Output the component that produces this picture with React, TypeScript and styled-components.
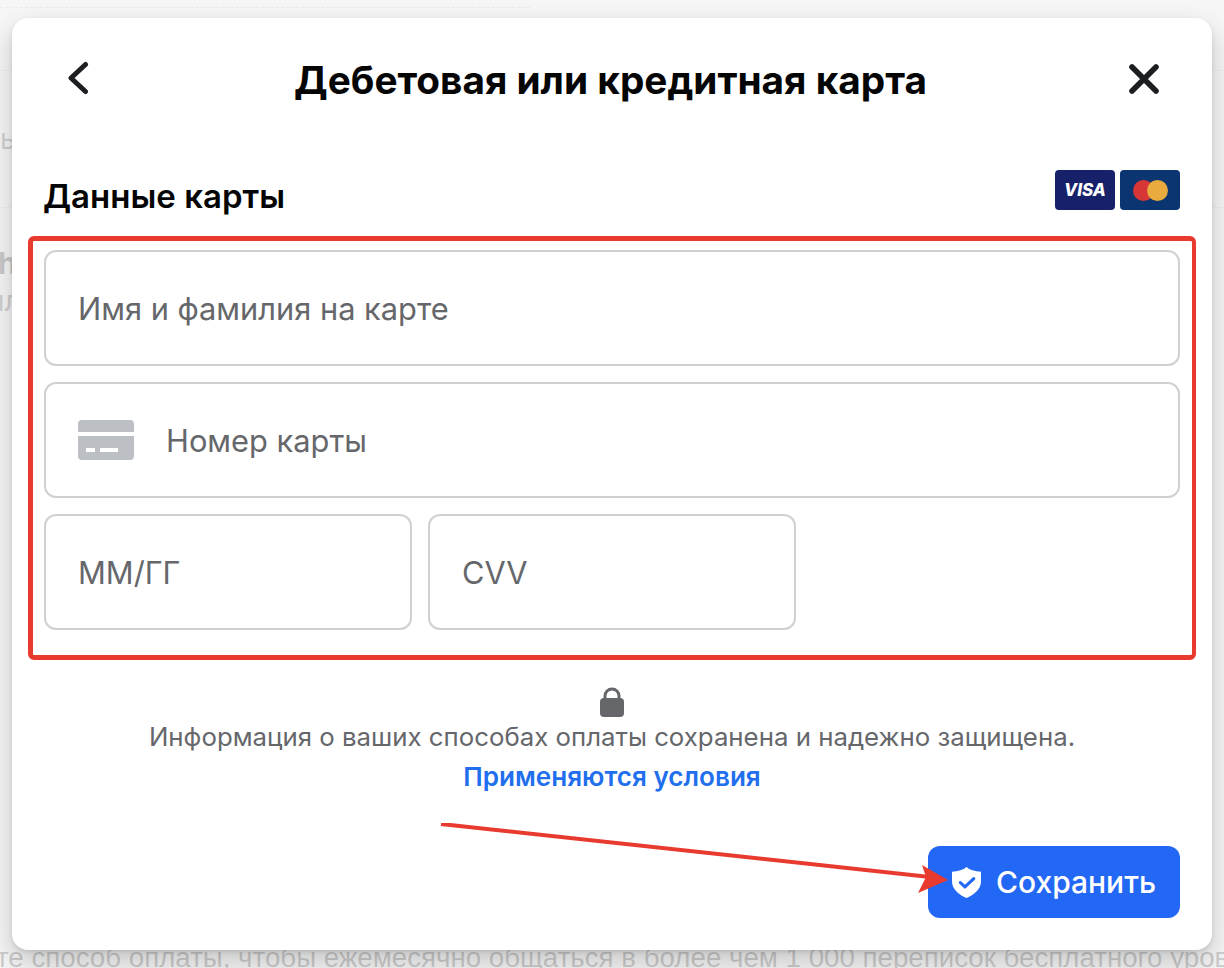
import styled, { createGlobalStyle } from 'styled-components'

const GlobalStyle = createGlobalStyle`
  html, body {
    margin: 0;
    height: 100%;
    overflow: hidden;
    font-family: Inter, "Noto Sans", sans-serif;
  }
  * { box-sizing: border-box; }
`

function BackIcon() {
  return (
    <svg width="24" height="36" viewBox="0 0 24 36" fill="none">
      <path d="M19.5 3.5 L5 17 L19.5 30.5" stroke="#1c1e21" strokeWidth="5" strokeLinecap="round" strokeLinejoin="round" />
    </svg>
  )
}

function CloseIcon() {
  return (
    <svg width="32" height="32" viewBox="0 0 32 32" fill="none">
      <path d="M4 4 L28 28 M28 4 L4 28" stroke="#1c1e21" strokeWidth="5.6" strokeLinecap="round" />
    </svg>
  )
}

function VisaBadge() {
  return (
    <Badge color="#16216a">
      <VisaText>VISA</VisaText>
    </Badge>
  )
}

function MastercardBadge() {
  return (
    <Badge color="#0b3570">
      <svg width="35" height="21" viewBox="0 0 35 21">
        <circle cx="10.5" cy="10.5" r="10.5" fill="#d63636" />
        <circle cx="24.5" cy="10.5" r="10.5" fill="#e9ab3e" />
      </svg>
    </Badge>
  )
}

function CardIcon() {
  return (
    <svg width="56" height="40" viewBox="0 0 56 40">
      <path d="M4 0 H52 A4 4 0 0 1 56 4 V12 H0 V4 A4 4 0 0 1 4 0 Z" fill="#bcc0c4" />
      <path d="M0 16 H56 V36 A4 4 0 0 1 52 40 H4 A4 4 0 0 1 0 36 Z" fill="#bcc0c4" />
      <rect x="8" y="28" width="9" height="4" fill="#fff" />
      <rect x="22" y="28" width="18" height="4" fill="#fff" />
    </svg>
  )
}

function LockIcon() {
  return (
    <svg width="24" height="30" viewBox="0 0 24 30">
      <path d="M5 13 V9 A7 7 0 0 1 19 9 V13" fill="none" stroke="#65676b" strokeWidth="3" />
      <rect x="0" y="11" width="24" height="19" rx="4" fill="#65676b" />
    </svg>
  )
}

function ShieldIcon() {
  return (
    <svg width="29" height="31" viewBox="0 0 28 32" preserveAspectRatio="none">
      <path d="M14 0 C17 3 22 4.5 28 5 V15 C28 23 21 29 14 32 C7 29 0 23 0 15 V5 C6 4.5 11 3 14 0 Z" fill="#fff" />
      <path d="M8 16 L12.5 20.5 L21 12" fill="none" stroke="#2368f5" strokeWidth="3" strokeLinecap="round" strokeLinejoin="round" />
    </svg>
  )
}

function Arrow() {
  return (
    <ArrowSvg width="530" height="80" viewBox="0 0 530 80">
      <path d="M1 1 L490 54" stroke="#e83a2e" strokeWidth="4" />
      <path d="M508 57 L482 42 L486 54 L478 70 Z" fill="#e83a2e" />
    </ArrowSvg>
  )
}

export default function App() {
  return (
    <>
      <GlobalStyle />
      <Page>
        <DashedRow />
        <BackdropHeader />
        <BackdropSection>
          <BackdropLabel>ь</BackdropLabel>
        </BackdropSection>
        <BackdropSection>
          <BackdropName>h</BackdropName>
          <BackdropClipped>пл</BackdropClipped>
        </BackdropSection>
        <BackdropFooter>
          те способ оплаты, чтобы ежемесячно общаться в более чем 1 000 переписок бесплатного уровня
        </BackdropFooter>
        <Overlay />
        <Modal>
          <Header>
            <IconButton>
              <BackIcon />
            </IconButton>
            <Title>Дебетовая или кредитная карта</Title>
            <IconButton>
              <CloseIcon />
            </IconButton>
          </Header>
          <SectionHead>
            <SectionTitle>Данные карты</SectionTitle>
            <Badges>
              <VisaBadge />
              <MastercardBadge />
            </Badges>
          </SectionHead>
          <Highlight>
            <Field>
              <Placeholder>Имя и фамилия на карте</Placeholder>
            </Field>
            <Field>
              <CardIcon />
              <Placeholder>Номер карты</Placeholder>
            </Field>
            <ShortFields>
              <Field>
                <Placeholder>ММ/ГГ</Placeholder>
              </Field>
              <Field>
                <Placeholder>CVV</Placeholder>
              </Field>
            </ShortFields>
          </Highlight>
          <Notice>
            <LockIcon />
            <NoticeText>Информация о ваших способах оплаты сохранена и надежно защищена.</NoticeText>
            <TermsLink>Применяются условия</TermsLink>
          </Notice>
          <Footer>
            <SaveButton>
              <ShieldIcon />
              Сохранить
            </SaveButton>
          </Footer>
          <Arrow />
        </Modal>
      </Page>
    </>
  )
}

const Page = styled.div`
  background: #ffffff;
  display: flex;
  flex-direction: column;
  height: 968px;
  overflow: hidden;
  position: relative;
  width: 1224px;
`

const DashedRow = styled.div`
  border-bottom: dashed 1px #c8c8c8;
  height: 8px;
  width: 530px;
`

const BackdropHeader = styled.div`
  border-bottom: solid 1px #dcdcdc;
  height: 63px;
`

const BackdropSection = styled.div`
  border-bottom: solid 1px #dcdcdc;
  display: flex;
  flex-direction: column;
  height: 137px;
  justify-content: center;

  &:nth-of-type(4) {
    border-bottom: none;
    flex: 1;
    justify-content: flex-start;
    padding-top: 36px;
  }
`

const BackdropLabel = styled.p`
  color: #404040;
  font-size: 28px;
  line-height: 34px;
  margin: 0;
`

const BackdropClipped = styled(BackdropLabel)`
  margin-left: -12px;
`

const BackdropName = styled.p`
  color: #202020;
  font-size: 30px;
  font-weight: 700;
  line-height: 38px;
  margin: 0 0 2px -2px;
`

const BackdropFooter = styled.p`
  color: #303030;
  font-family: "Liberation Sans", Arial, sans-serif;
  font-size: 27.7px;
  line-height: 32px;
  margin: 0 0 -6px -4px;
  white-space: nowrap;
`

const Overlay = styled.div`
  background: rgba(244, 244, 244, 0.8);
  inset: 0;
  position: absolute;
`

const Modal = styled.div`
  background: #ffffff;
  border-radius: 16px;
  box-shadow: 0 12px 28px rgba(0, 0, 0, 0.2), 0 2px 4px rgba(0, 0, 0, 0.1);
  display: flex;
  flex-direction: column;
  height: 932px;
  left: 12px;
  padding: 0 32px;
  position: absolute;
  top: 18px;
  width: 1200px;
`

const Header = styled.div`
  align-items: center;
  display: flex;
  height: 122px;
  justify-content: space-between;
  padding: 0 20px 0 22px;
`

const IconButton = styled.div`
  align-items: center;
  display: flex;
  justify-content: center;
`

const Title = styled.h1`
  color: #050505;
  font-size: 38.75px;
  font-weight: 700;
  margin: 0 0 0 3px;
`

const SectionHead = styled.div`
  align-items: flex-start;
  display: flex;
  height: 96px;
  justify-content: space-between;
  padding-top: 30px;
`

const SectionTitle = styled.h2`
  color: #050505;
  font-size: 33px;
  font-weight: 600;
  line-height: 52px;
  margin: 0 0 0 -1px;
`

const Badges = styled.div`
  display: flex;
  gap: 5px;
`

const Badge = styled.div<{ color: string }>`
  align-items: center;
  background: ${({ color }) => color};
  border-radius: 4px;
  display: flex;
  height: 40px;
  justify-content: center;
  width: 60px;
`

const VisaText = styled.span`
  color: #ffffff;
  font-size: 17px;
  font-style: italic;
  font-weight: 800;
`

const Highlight = styled.div`
  border-color: #e83a2e;
  border-radius: 6px;
  border-style: solid;
  border-width: 5px 4px 5px 5px;
  display: flex;
  flex-direction: column;
  gap: 16px;
  margin: 0 -16px;
  padding: 9px 12px 25px 11px;
`

const Field = styled.div`
  align-items: center;
  background: #ffffff;
  border: solid 2px #ced0d4;
  border-radius: 12px;
  display: flex;
  gap: 32px;
  height: 116px;
  padding: 0 32px;
`

const Placeholder = styled.span`
  color: #65676b;
  font-size: 30.8px;
`

const ShortFields = styled.div`
  display: grid;
  gap: 16px;
  grid-template-columns: repeat(3, 1fr);
`

const Notice = styled.div`
  align-items: center;
  display: flex;
  flex-direction: column;
  padding-top: 27px;
`

const NoticeText = styled.p`
  color: #65676b;
  font-size: 25.8px;
  line-height: 30px;
  margin: 5px 0 0;
`

const TermsLink = styled.a`
  color: #216fee;
  font-size: 26.1px;
  font-weight: 600;
  line-height: 30px;
  margin-top: 10px;
`

const Footer = styled.div`
  display: flex;
  justify-content: flex-end;
  padding-top: 54px;
`

const SaveButton = styled.button`
  align-items: center;
  background: #2368f5;
  border: none;
  border-radius: 12px;
  color: #ffffff;
  display: flex;
  font-family: inherit;
  font-size: 30px;
  font-weight: 500;
  gap: 15px;
  height: 72px;
  justify-content: center;
  width: 252px;
`

const ArrowSvg = styled.svg`
  left: 428px;
  position: absolute;
  top: 805px;
`
